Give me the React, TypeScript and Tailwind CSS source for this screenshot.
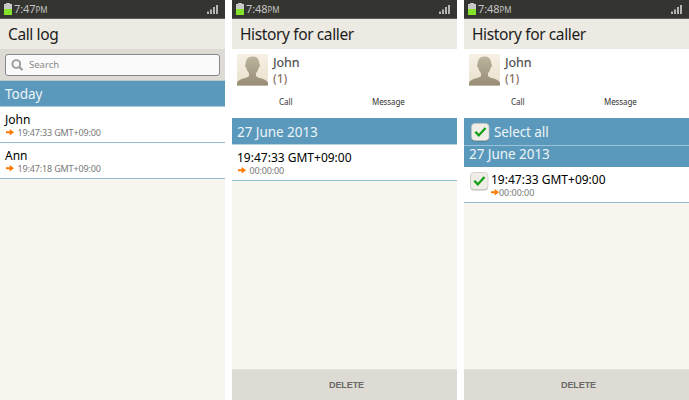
import type { ReactNode } from "react";

function StatusBar({ time }: { time: string }) {
  return (
    <div className="flex h-[19px] shrink-0 items-center justify-between border-b border-[#5e5d59] bg-[#343431] pl-[3.5px] pr-[7px]">
      <div className="flex items-center">
        <svg width="8" height="12" viewBox="0 0 8 12" className="block">
          <path d="M2 0h4v1h2v11H0V1h2z" fill="#c9c9c9" />
          <path d="M0 6h8v6H0z" fill="#86e32b" />
        </svg>
        <span className="ml-[2.5px] flex items-baseline leading-[18px] text-[#c4c4c2]">
          <span className="text-[11px] tracking-[-0.1px]">{time}</span>
          <span className="text-[8px]">PM</span>
        </span>
      </div>
      <svg width="11" height="9" viewBox="0 0 11 9" className="block">
        <path d="M0 6.500h2V9H0zM3 4.500h2V9H3zM6 2h2v7H6zM9 0h2v9H9z" fill="#b5b5b1" />
      </svg>
    </div>
  );
}

function Phone({ time, title, children }: { time: string; title: string; children: ReactNode }) {
  return (
    <section className="flex h-[400px] w-[225px] shrink-0 flex-col overflow-hidden whitespace-nowrap bg-[#f8f5ee]">
      <StatusBar time={time} />
      <h1 className="h-[30px] shrink-0 bg-[#edeae3] pl-2 text-[15.5px] leading-[31px] tracking-[-0.38px] text-[#1c1c1c]">{title}</h1>
      {children}
    </section>
  );
}

function Arrow() {
  return (
    <svg width="8" height="7" viewBox="0 0 8 7" className="mb-px block shrink-0">
      <path d="M0 2.300h3.700V0L8 3.300 3.700 6.600V4.300H0z" fill="#ff7800" />
    </svg>
  );
}

function LogRow({ name, time }: { name: string; time: string }) {
  return (
    <div className="h-9 shrink-0 border-b border-[#93bdd4] bg-white pl-[5px] pt-[5px]">
      <div className="text-[12px] leading-[15px] text-black">{name}</div>
      <div className="flex items-center pl-px leading-[12px]">
        <Arrow />
        <span className="ml-[3.5px] text-[9px] tracking-[-0.15px] text-[#777]">{time}</span>
      </div>
    </div>
  );
}

function Caller() {
  return (
    <div className="h-[69px] shrink-0 bg-white pl-[5px] pt-[5px]">
      <div className="flex h-8">
        <svg width="31" height="32" viewBox="0 0 31 32" className="block">
          <defs>
            <linearGradient id="paper" x1="0" y1="0" x2="0" y2="1">
              <stop offset="0" stopColor="#f6f0e4" />
              <stop offset="1" stopColor="#eae1cd" />
            </linearGradient>
            <linearGradient id="person" x1="0" y1="0" x2="0" y2="1">
              <stop offset="0" stopColor="#bbb39d" />
              <stop offset="1" stopColor="#978d76" />
            </linearGradient>
          </defs>
          <path d="M0 0h31v32H0z" fill="url(#paper)" />
          <path
            d="M15.500 2.500C11 2.500 8.800 5.500 8.800 9.500C7.700 10 8 13.500 9.400 13.900C9.900 16.500 11 18 12 19V22C11 24.500 1.500 24 0 29V31.500H31V29C29.500 24 20 24.500 19 22V19C20 18 21.100 16.500 21.600 13.900C23 13.500 23.300 10 22.200 9.500C22.200 5.500 20 2.500 15.500 2.500Z"
            fill="url(#person)"
          />
        </svg>
        <div className="ml-[5px] pt-px text-[12px] leading-[16px]">
          <div className="text-[12.5px] font-medium tracking-[-0.1px] text-[#555]">John</div>
          <div className="font-medium text-[#8a7567]">(1)</div>
        </div>
      </div>
      <div className="mt-[10px] flex text-[8px] leading-[12px] text-[#333]">
        <span className="w-[93px] pl-[42px]">Call</span>
        <span className="pl-[42px] tracking-[-0.08px]">Message</span>
      </div>
    </div>
  );
}

function Check() {
  return (
    <svg width="19" height="19" viewBox="0 0 19 19" className="block shrink-0">
      <rect x="0.500" y="1.500" width="17.500" height="17" rx="3.500" fill="#000" opacity=".28" />
      <rect x="0.500" y="0.500" width="17.500" height="17" rx="3.500" fill="#f0ede7" stroke="#c9c5bd" strokeWidth=".7" />
      <path d="M4.300 8.700L7.800 12.400L14.500 5" fill="none" stroke="#14a016" strokeWidth="2.300" />
    </svg>
  );
}

function DeleteBar() {
  return (
    <button className="mt-auto h-[31px] shrink-0 border-t border-[#e6e3dc] bg-[#dedbd4] pl-1 pt-px text-center font-['Liberation_Sans',sans-serif] text-[9px] font-bold tracking-[-0.08px] text-[#6a6966]">
      DELETE
    </button>
  );
}

export default function App() {
  return (
    <main className="flex h-[400px] w-[689px] gap-[7px] overflow-hidden bg-white font-['Noto_Sans',sans-serif]">
      <Phone time="7:47" title="Call log">
        <div className="h-[32px] shrink-0 border-b border-[#b9c8cd] bg-[#dedbd4] px-[5px] pt-[5px]">
          <div className="flex h-[22px] items-center rounded-[3px] border border-[#858791] bg-[#fafafa] pl-[5px]">
            <svg width="13" height="12" viewBox="0 0 13 12" className="block">
              <circle cx="5.300" cy="5" r="3.900" fill="none" stroke="#9b9b9b" strokeWidth="1.900" />
              <path d="M8.300 8L11.500 11" stroke="#9b9b9b" strokeWidth="2.300" />
            </svg>
            <span className="ml-[5px] text-[9.5px] text-[#888]">Search</span>
          </div>
        </div>
        <div className="h-[26px] shrink-0 border-b border-[#a9cbdc] bg-[#5a99bb] pl-[5px] text-[13.5px] leading-[26px] text-[#edf4f8]">Today</div>
        <LogRow name="John" time="19:47:33 GMT+09:00" />
        <LogRow name="Ann" time="19:47:18 GMT+09:00" />
      </Phone>

      <Phone time="7:48" title="History for caller">
        <Caller />
        <div className="h-[27px] shrink-0 border-b border-[#b7d2e0] bg-[#5a99bb] pl-[5px] text-[13.5px] leading-[28px] tracking-[-0.05px] text-[#edf4f8]">27 June 2013</div>
        <LogRow name="19:47:33 GMT+09:00" time="00:00:00" />
        <DeleteBar />
      </Phone>

      <Phone time="7:48" title="History for caller">
        <Caller />
        <div className="flex h-7 shrink-0 items-center border-b border-[#9bc2d6] bg-[#5a99bb] pl-[7px] pt-px text-[13.5px] tracking-[-0.1px] text-[#edf4f8]">
          <Check />
          <span className="ml-1 pt-px">Select all</span>
        </div>
        <div className="h-[21px] shrink-0 bg-[#5a99bb] pl-[5px] text-[13.5px] leading-[17px] tracking-[-0.05px] text-[#edf4f8]">27 June 2013</div>
        <div className="flex h-9 shrink-0 border-b border-[#93bdd4] bg-white pl-[6px] pt-[5px]">
          <Check />
          <div className="ml-[2px]">
            <div className="text-[12px] leading-[15px] text-black">19:47:33 GMT+09:00</div>
            <div className="flex items-center leading-[12px]">
              <Arrow />
              <span className="text-[9px] tracking-[-0.05px] text-[#777]">00:00:00</span>
            </div>
          </div>
        </div>
        <DeleteBar />
      </Phone>
    </main>
  );
}
